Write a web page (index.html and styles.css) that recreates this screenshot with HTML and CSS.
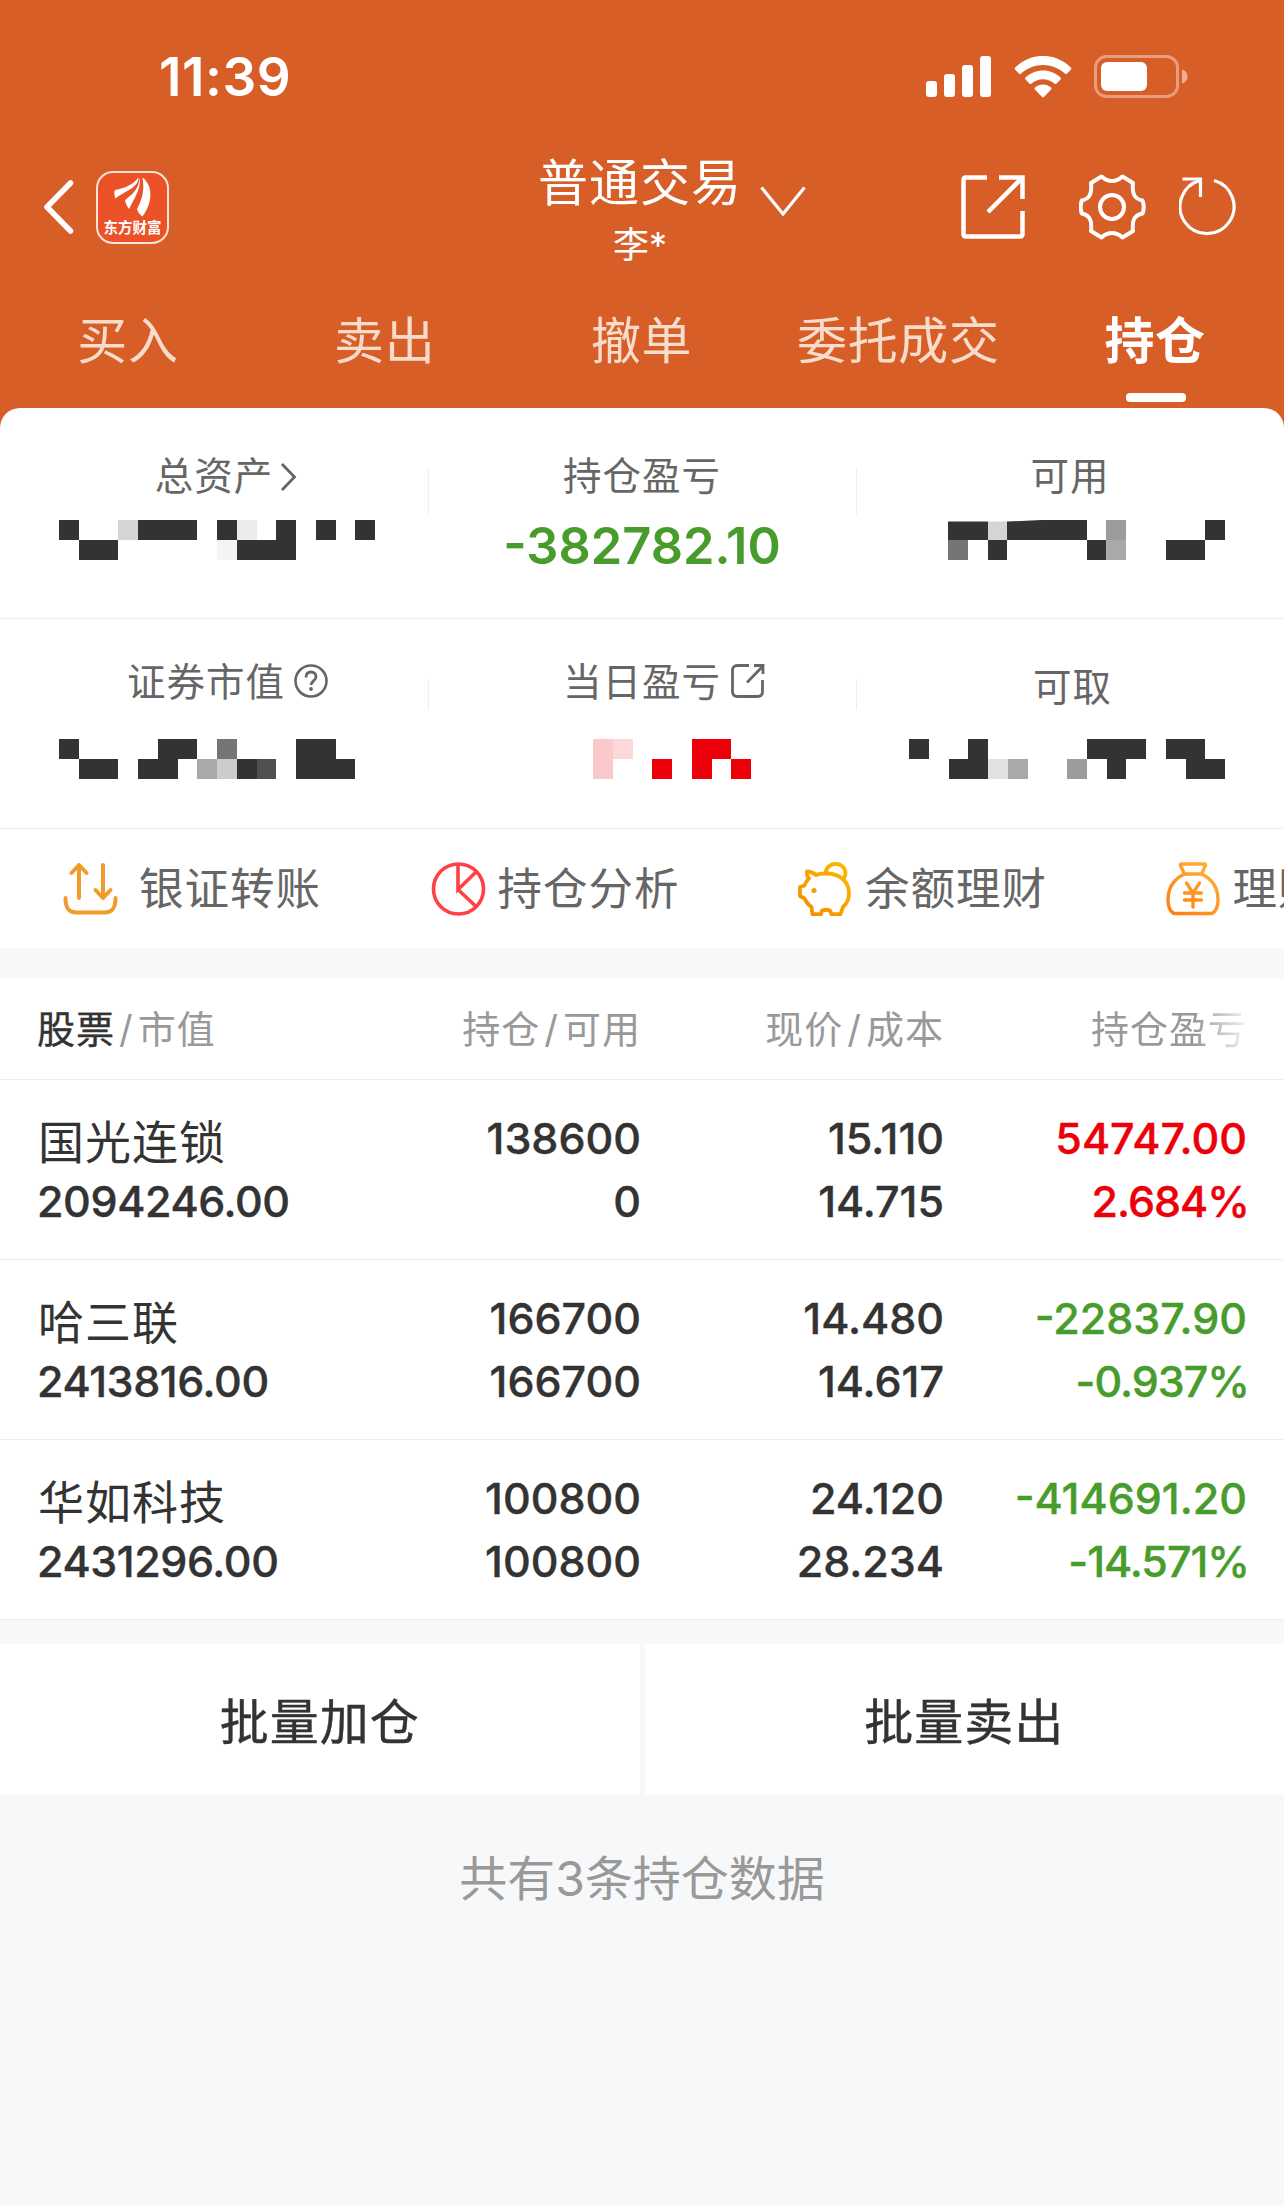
FILE: index.html
```html
<!DOCTYPE html>
<html lang="zh-CN">
<head>
  <meta charset="UTF-8" />
  <meta name="viewport" content="width=device-width, initial-scale=1" />
  <title>普通交易 - 持仓</title>
  <link rel="stylesheet" href="styles.css">
</head>
<body>

<header>
  <div class="status-bar">
    <span class="time">11:39</span>
    <div class="status-icons">
      <svg width="66" height="42" viewBox="0 0 66 42" fill="#fff">
        <rect x="0" y="25" width="11" height="16" rx="3" />
        <rect x="18" y="18" width="11" height="23" rx="3" />
        <rect x="36" y="9" width="11" height="32" rx="3" />
        <rect x="54" y="0" width="11" height="41" rx="3" />
      </svg>
      <svg width="58" height="42" viewBox="0 0 58 42" fill="#fff">
        <path d="M1.2 11.5C17-4 41-4 56.8 11.5q1 1.200 0 2.200l-4 4q-.8.7-1.600 0C38.500 6 19.500 6 6.800 17.700q-.8.7-1.600 0l-4-4q-1-1 0-2.200z" />
        <path d="M11.500 21.500c10-9.300 25-9.300 35 0q.9 1 0 2l-4.200 4.200q-.8.7-1.600 0c-6.800-6-16.600-6-23.400 0q-.8.7-1.600 0l-4.200-4.200q-.9-1 0-2z" />
        <path d="M20.900 31.500c4.600-4 11.600-4 16.200 0q1 1 0 2l-7.200 7.600q-.9.8-1.800 0l-7.200-7.600q-1-1 0-2z" />
      </svg>
      <svg width="95" height="43" viewBox="0 0 95 43">
        <rect x="1.500" y="1.500" width="82" height="40" rx="11" fill="none" stroke="#fff" stroke-opacity=".4" stroke-width="3" />
        <rect x="7" y="7" width="46" height="29" rx="6" fill="#fff" />
        <path d="M88 14.500c4 1.500 5.500 4 5.500 7s-1.500 5.500-5.500 7z" fill="#fff" fill-opacity=".5" />
      </svg>
    </div>
  </div>

  <div class="title-bar">
    <div class="title-left">
      <svg width="32" height="56" viewBox="0 0 32 56" fill="none" stroke="#fff" stroke-width="5.500" stroke-linecap="round" stroke-linejoin="round">
        <path d="M27.500 4L4 28l23.500 24" />
      </svg>
      <div class="app-logo">
        <svg width="38" height="40" viewBox="0 0 38 40" fill="#fff">
          <path d="M1 13C11 11 19 8 24.500.5 24 11 14 12 1.500 21.500 0 18 0 15 1 13z" />
          <path d="M25.500.5C28 10 20 22 15 32c-2-3-3.500-5.500-4-9C19 17 25 12 25.500.5z" />
          <path d="M28.500.5C40 9 38 27 28.500 39.500c-3-2-4.500-4-5.500-7.500 6-11 7.500-20 5.500-31.500z" />
        </svg>
        <span>东方财富</span>
      </div>
    </div>
    <div class="title-center">
      <h1>普通交易
        <svg class="caret" width="46" height="32" viewBox="0 0 46 32" fill="none" stroke="#fff" stroke-width="3.200">
          <path d="M1.500 1.500L23 28 44.500 1.500" />
        </svg>
      </h1>
      <p>李*</p>
    </div>
    <div class="title-right">
      <svg class="icon-share" width="64" height="64" viewBox="0 0 64 64" fill="none" stroke="#fff" stroke-width="4.500">
        <path d="M26 2.500H5q-2.500 0-2.500 2.500v54q0 2.500 2.500 2.500h54q2.500 0 2.500-2.500V36" />
        <path d="M38 2.500h23.500V24M61 3L27 37" />
      </svg>
      <svg class="icon-gear" width="67" height="66" viewBox="0 0 67 66" fill="none" stroke="#fff" stroke-width="4" stroke-linejoin="round">
        <path d="M22.500 2.500C29 8.500 37 8.500 43.500 2.500L54 9C53 19 54.500 24.500 63.500 26.500Q66 33 63.500 39.500C54.500 41.500 53 47 54 57l-10.500 6.500C37 57.500 29 57.500 22.500 63.500L12 57C13 47 11.500 41.500 2.800 39.500Q.5 33 2.800 26.500C11.500 24.500 13 19 12 9z" />
        <circle cx="33" cy="33" r="12" />
      </svg>
      <svg width="58" height="60" viewBox="0 0 58 60" fill="none" stroke="#fff" stroke-width="3.200">
        <path d="M35 3.500A27 27 0 1 1 21 3.500" />
        <path d="M3.500 2H21.500V20" />
      </svg>
    </div>
  </div>

  <nav>
    <a>买入</a>
    <a>卖出</a>
    <a>撤单</a>
    <a>委托成交</a>
    <a class="active">持仓</a>
  </nav>
</header>

<main>
  <section class="assets">
    <div class="asset-row">
      <div class="asset">
        <div class="label">总资产
          <svg class="arrow" width="17" height="28" viewBox="0 0 17 28" fill="none" stroke="#666" stroke-width="2.800"><path d="M2 1l12.500 13L2 27" /></svg>
        </div>
        <svg class="mask" width="316" height="40" viewBox="0 0 16 2" preserveAspectRatio="none" fill="#333" shape-rendering="crispEdges">
          <path d="M0 0h1v1H0zM4 0h3v1H4zM8 0h1v1H8zM11 0h1v1h-1zM13 0h1v1h-1zM15 0h1v1h-1zM1 1h2v1H1zM9 1h3v1H9z" />
          <path d="M3 0h1v1H3z" fill="#d5d5d5" />
          <path d="M9 0h1v1H9z" fill="#ebebeb" />
          <path d="M8 1h1v1H8z" fill="#f4f4f4" />
        </svg>
      </div>
      <div class="asset">
        <div class="label">持仓盈亏</div>
        <div class="amount green">-382782.10</div>
      </div>
      <div class="asset">
        <div class="label">可用</div>
        <svg class="mask mask-right" width="277" height="40" viewBox="0 0 14 2" preserveAspectRatio="none" fill="#333" shape-rendering="crispEdges">
          <path d="M0 0h2v1H0zM3 0h4v1H3zM13 0h1v1h-1zM2 1h1v1H2zM7 1h1v1H7zM11 1h2v1h-2z" />
          <path d="M2 0h1v1H2z" fill="#d5d5d5" />
          <path d="M8 0h1v1H8z" fill="#9c9c9c" />
          <path d="M0 1h1v1H0z" fill="#757575" />
          <path d="M8 1h1v1H8z" fill="#a9a9a9" />
          <path d="M0 0h4.700L3 .08H0z" fill="#fff" shape-rendering="auto" />
        </svg>
      </div>
    </div>

    <div class="asset-row second">
      <div class="asset">
        <div class="label shift-left">证券市值
          <svg class="help" width="34" height="34" viewBox="0 0 34 34" fill="none" stroke="#666" stroke-width="2.600">
            <circle cx="17" cy="17" r="15.500" />
            <path d="M12 13.500c0-3.500 2-5.500 5-5.500s5 2 5 4.700c0 4-5 4.300-5 8.300" stroke-width="2.800" />
            <circle cx="17" cy="25" r="1.900" fill="#666" stroke="none" />
          </svg>
        </div>
        <svg class="mask" width="316" height="40" viewBox="0 0 16 2" preserveAspectRatio="none" fill="#333" shape-rendering="crispEdges">
          <path d="M0 0h1v1H0zM5 0h2v1H5zM12 0h2v1h-2zM1 1h2v1H1zM4 1h2v1H4zM9 1h1v1H9zM12 1h3v1h-3z" />
          <path d="M8 0h1v1H8z" fill="#757575" />
          <path d="M7 1h1v1H7z" fill="#a9a9a9" />
          <path d="M8 1h1v1H8z" fill="#ccc" />
          <path d="M10 1h1v1h-1z" fill="#505050" />
        </svg>
      </div>
      <div class="asset">
        <div class="label">当日盈亏
          <svg class="link" width="34" height="34" viewBox="0 0 34 34" fill="none" stroke="#666" stroke-width="2.800">
            <path d="M18 1.500H6.500q-5 0-5 5v21q0 5 5 5h20q5 0 5-5V16" />
            <path d="M23 1.500h9V10M32 2L16 18.500" />
          </svg>
        </div>
        <svg class="mask mask-mid" width="158" height="40" viewBox="0 0 8 2" preserveAspectRatio="none" fill="#ec000a" shape-rendering="crispEdges">
          <path d="M5 0h2v1H5zM3 1h1v1H3zM5 1h1v1H5zM7 1h1v1H7z" />
          <path d="M0 0h1v2H0z" fill="#fac9cc" />
          <path d="M1 0h1v1H1z" fill="#fcd8da" />
        </svg>
      </div>
      <div class="asset">
        <div class="label shift-down">可取</div>
        <svg class="mask mask-right" width="316" height="40" viewBox="0 0 16 2" preserveAspectRatio="none" fill="#333" shape-rendering="crispEdges">
          <path d="M0 0h1v1H0zM3 0h1v1H3zM9 0h3v1H9zM13 0h2v1h-2zM2 1h2v1H2zM10 1h1v1h-1zM14 1h2v1h-2z" />
          <path d="M4 1h1v1H4z" fill="#e1e1e1" />
          <path d="M5 1h1v1H5z" fill="#a9a9a9" />
          <path d="M8 1h1v1H8z" fill="#9c9c9c" />
        </svg>
      </div>
    </div>

    <div class="shortcuts">
      <div class="shortcut wide">
        <svg width="55" height="54" viewBox="0 0 55 54" fill="none" stroke="#f39a2c" stroke-width="4" stroke-linecap="round" stroke-linejoin="round">
          <path d="M16 36V3M8.500 11L16 3l7.500 8M40 3v33M32.500 28l7.500 8 7.500-8" />
          <path d="M2.500 36c0 10 3 14.500 11 14.500h28c8 0 11-4.500 11-14.500" />
        </svg>
        <span>银证转账</span>
      </div>
      <div class="shortcut">
        <svg width="55" height="54" viewBox="0 0 55 54" fill="none" stroke="#ff4044" stroke-width="3.600">
          <circle cx="27.500" cy="27" r="25" />
          <path d="M27 2v25.500L45 10M27 27.500L45 44.500" />
        </svg>
        <span>持仓分析</span>
      </div>
      <div class="shortcut">
        <svg width="55" height="54" viewBox="0 0 55 54" fill="none" stroke="url(#pig)" stroke-width="3.800" stroke-linejoin="round">
          <defs>
            <linearGradient id="pig" gradientUnits="userSpaceOnUse" x1="50" y1="2" x2="10" y2="50">
              <stop offset="0" stop-color="#fdb900" />
              <stop offset="1" stop-color="#f59000" />
            </linearGradient>
          </defs>
          <path d="M9 9.500Q14 9.500 18 13 21 11.500 27 11.500C42 11 51 20 51 31q0 9-6 14l-2.500 7.200h-9L32 48.500q-4-1.500-8 0l-1 3.700h-8.500L13.500 45Q9 42 6.500 36.500L2 34v-9l4.500-1.500Q8 19 11 16.500 8 13 9 9.500z" />
          <path d="M27.500 11.500C28.500-1.500 47-1 47.500 11q0 3-1.500 5.500" />
          <circle cx="16" cy="28.500" r="2.600" fill="#f99e0a" stroke="none" />
        </svg>
        <span>余额理财</span>
      </div>
      <div class="shortcut">
        <svg width="55" height="54" viewBox="0 0 55 54" fill="none" stroke="url(#bag)" stroke-width="3.400" stroke-linecap="round" stroke-linejoin="round">
          <defs>
            <linearGradient id="bag" gradientUnits="userSpaceOnUse" x1="45" y1="2" x2="8" y2="50">
              <stop offset="0" stop-color="#ffb03a" />
              <stop offset="1" stop-color="#ff8010" />
            </linearGradient>
          </defs>
          <path d="M15.500 2h23q1.500 0 1 1.500L35.500 12h-17L14.500 3.500Q14 2 15.500 2z" />
          <path d="M18.500 12C8 17 2 26 2 38q0 8 4 12 1 1.500 3 1.500h36q2 0 3-1.500 4-4 4-12c0-12-6-21-16.500-26" />
          <path d="M20.500 21L27 31l6.500-10M27 31v14M18.500 31h17M18.500 38h17" />
        </svg>
        <span>理财</span>
      </div>
    </div>
  </section>

  <section class="holdings">
    <div class="table-head">
      <div><b>股票</b><i>/</i>市值</div>
      <div>持仓<i>/</i>可用</div>
      <div>现价<i>/</i>成本</div>
      <div class="fade">持仓盈亏</div>
    </div>
    <div class="stock">
      <div class="name"><strong>国光连锁</strong><span>2094246.00</span></div>
      <div><span>138600</span><span>0</span></div>
      <div><span>15.110</span><span>14.715</span></div>
      <div class="red"><span>54747.00</span><span class="percent">2.684%</span></div>
    </div>
    <div class="stock">
      <div class="name"><strong>哈三联</strong><span>2413816.00</span></div>
      <div><span>166700</span><span>166700</span></div>
      <div><span>14.480</span><span>14.617</span></div>
      <div class="green"><span>-22837.90</span><span class="percent">-0.937%</span></div>
    </div>
    <div class="stock">
      <div class="name"><strong>华如科技</strong><span>2431296.00</span></div>
      <div><span>100800</span><span>100800</span></div>
      <div><span>24.120</span><span>28.234</span></div>
      <div class="green"><span>-414691.20</span><span class="percent">-14.571%</span></div>
    </div>
  </section>

  <section class="actions">
    <button>批量加仓</button>
    <button>批量卖出</button>
  </section>

  <p class="summary">共有3条持仓数据</p>
</main>

</body>
</html>
```

FILE: styles.css
```css
/* Reset */
* {
  margin: 0;
  padding: 0;
  box-sizing: border-box;
}
body {
  min-height: 2206px;
  font-family: Inter, 'Noto Sans CJK SC', sans-serif;
  color: #333;
  background: #f7f8fa;
  overflow-x: hidden;
}
svg {
  display: block;
  flex-shrink: 0;
}

/* Header */
header {
  height: 436px;
  margin-bottom: -28px;
  background: #d85e28;
  color: #fff;
}
.status-bar {
  height: 151px;
  display: flex;
  justify-content: space-between;
  align-items: center;
  padding: 2px 95px 0 159px;
}
.time {
  font-size: 53px;
  font-weight: 600;
  font-kerning: none;
  letter-spacing: .6px;
}
.status-icons {
  display: flex;
  align-items: center;
  gap: 22px;
}
.title-bar {
  height: 110px;
  display: grid;
  grid-template-columns: 1fr auto 1fr;
  align-items: center;
  padding: 0 47px 0 43px;
}
.title-left,
.title-right {
  display: flex;
  align-items: center;
  margin-top: -2px;
}
.title-left {
  gap: 21px;
}
.app-logo {
  width: 73px;
  height: 73px;
  border: 2px solid #fbe3d8;
  border-radius: 17px;
  background: #eb5228;
  display: flex;
  flex-direction: column;
  align-items: center;
  padding-top: 4px;
}
.app-logo span {
  font-size: 14.500px;
  line-height: 19px;
  font-family: 'Noto Sans CJK SC', sans-serif;
  font-weight: 700;
  white-space: nowrap;
}
.title-center {
  text-align: center;
}
.title-center h1 {
  position: relative;
  font-size: 50px;
  line-height: 60px;
  font-weight: 400;
  letter-spacing: 1px;
  margin-top: 2px;
}
.title-center .caret {
  position: absolute;
  left: 222px;
  top: 33px;
}
.title-center p {
  font-size: 36px;
  line-height: 40px;
  margin-top: 12px;
}
.title-right {
  justify-content: flex-end;
}
.icon-share {
  margin-right: 54px;
}
.icon-gear {
  margin-right: 33px;
}

/* Tabs */
nav {
  display: grid;
  grid-template-columns: repeat(5, 1fr);
  padding-top: 50px;
}
nav a {
  display: flex;
  flex-direction: column;
  align-items: center;
  font-size: 50px;
  line-height: 60px;
  letter-spacing: .6px;
  text-indent: -1px;
  color: #f7dccb;
  white-space: nowrap;
}
nav a.active {
  color: #fff;
  font-weight: 600;
}
nav a.active::after {
  content: '';
  width: 60px;
  height: 9px;
  margin-top: 22px;
  border-radius: 4px;
  background: #fff;
}

/* Assets */
.assets {
  position: relative;
  background: #fff;
  border-radius: 20px 20px 0 0;
}
.asset-row {
  height: 211px;
  display: grid;
  grid-template-columns: repeat(3, 1fr);
  border-bottom: 1px solid #eee;
  padding-top: 45px;
}
.asset-row.second {
  height: 210px;
}
.asset {
  position: relative;
  display: flex;
  flex-direction: column;
  align-items: center;
}
.asset + .asset::before {
  content: '';
  position: absolute;
  left: 0;
  top: 15px;
  width: 1px;
  height: 46px;
  background: #eee;
}
.second .asset + .asset::before {
  height: 31px;
}
.label {
  position: relative;
  font-size: 38.500px;
  line-height: 46px;
  letter-spacing: 1px;
  color: #666;
  white-space: nowrap;
}
.label svg {
  position: absolute;
  left: 100%;
  top: 10px;
}
.label .arrow {
  margin-left: 7px;
}
.label .help {
  margin-left: 9px;
  top: 5px;
}
.label .link {
  margin-left: 10px;
  top: 5px;
}
.second .label {
  margin-top: -5px;
  line-height: 46px;
}
.second .shift-left {
  margin-right: 16px;
}
.second .label.shift-down {
  margin-top: 0;
  margin-left: 5px;
  margin-bottom: -5px;
}
.amount {
  font-size: 50.500px;
  line-height: 60px;
  font-weight: 600;
  margin-top: 17px;
}
.mask {
  align-self: flex-start;
  margin: 21px 0 0 59px;
}
.mask-right {
  align-self: flex-end;
  margin: 21px 59px 0 0;
}
.second .mask {
  margin-top: 34px;
}
.mask-mid {
  margin-left: 165px;
}
.green {
  color: #489c2c;
}
.red {
  color: #ec000a;
}

/* Shortcuts */
.shortcuts {
  height: 119px;
  display: flex;
  align-items: center;
  padding-left: 63px;
  overflow: hidden;
}
.shortcut {
  flex: 0 0 367.500px;
  display: flex;
  align-items: center;
  gap: 12px;
  font-size: 44.500px;
  letter-spacing: 1px;
  line-height: 56px;
  color: #666;
  white-space: nowrap;
}
.shortcut.wide {
  gap: 21px;
}

/* Holdings */
.holdings {
  margin-top: 30px;
  background: #fff;
}
.table-head,
.stock {
  display: grid;
  grid-template-columns: 1fr 240px 303px 303px;
  padding: 0 37px;
  border-bottom: 1px solid #eee;
  text-align: right;
}
.table-head {
  height: 102px;
  align-items: center;
  padding-bottom: 4px;
  font-size: 38px;
  letter-spacing: 1px;
  color: #999;
}
.table-head div:first-child,
.stock .name {
  text-align: left;
}
.table-head b {
  font-weight: 400;
  color: #333;
  -webkit-text-stroke: .4px #333;
}
.table-head i {
  font-style: normal;
  margin: 0 4px;
}
.table-head .fade {
  -webkit-mask-image: linear-gradient(to right, #000 83%, transparent 102%);
  mask-image: linear-gradient(to right, #000 83%, transparent 102%);
}
.stock {
  height: 180px;
  padding-top: 27px;
}
.stock div {
  display: flex;
  flex-direction: column;
}
.stock span {
  font-size: 43px;
  line-height: 63px;
  font-weight: 500;
  -webkit-text-stroke: .4px currentColor;
}
.stock .name span {
  letter-spacing: -.4px;
}
.stock .percent {
  letter-spacing: -1px;
  margin-right: -2px;
}
.stock .name strong {
  font-size: 46px;
  line-height: 63px;
  font-weight: 400;
  letter-spacing: 1px;
  padding: 4px 0 0 1px;
  margin-bottom: -4px;
}

/* Bottom actions */
.actions {
  display: grid;
  grid-template-columns: 1fr 1fr;
  gap: 5px;
  margin-top: 24px;
}
.actions button {
  height: 150px;
  border: none;
  background: #fff;
  font: 400 49px Inter, 'Noto Sans CJK SC', sans-serif;
  letter-spacing: 1px;
  color: #333;
  padding-bottom: 2px;
  -webkit-text-stroke: .4px #333;
}
.summary {
  margin-top: 55px;
  font-size: 48px;
  line-height: 60px;
  text-align: center;
  color: #999;
}
```
